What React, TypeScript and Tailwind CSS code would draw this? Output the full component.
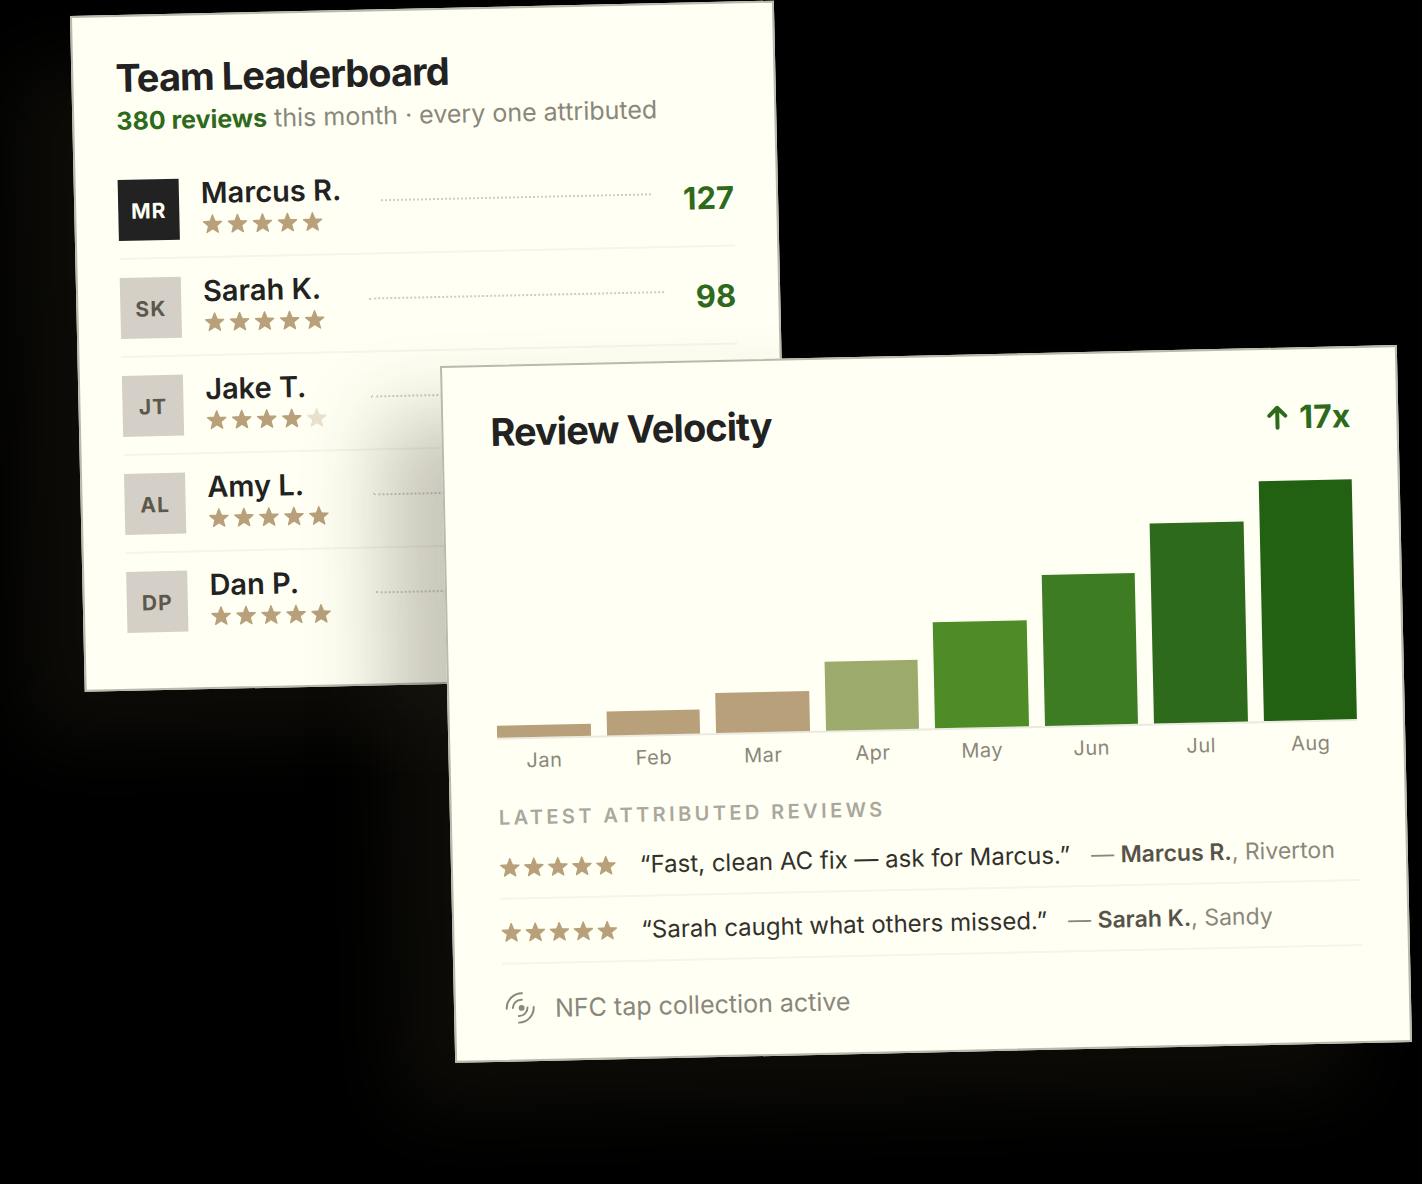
import React from "react";

type Member = {
  initials: string;
  name: string;
  rating: number;
  reviews?: number;
  lead?: boolean;
};

const members: Member[] = [
  { initials: "MR", name: "Marcus R.", rating: 5, reviews: 127, lead: true },
  { initials: "SK", name: "Sarah K.", rating: 5, reviews: 98 },
  { initials: "JT", name: "Jake T.", rating: 4 },
  { initials: "AL", name: "Amy L.", rating: 5 },
  { initials: "DP", name: "Dan P.", rating: 5 },
];

const months = [
  { label: "Jan", value: 12, color: "bg-[#b8a07a]" },
  { label: "Feb", value: 24, color: "bg-[#b8a07a]" },
  { label: "Mar", value: 40, color: "bg-[#b8a07a]" },
  { label: "Apr", value: 69, color: "bg-[#9cab6c]" },
  { label: "May", value: 106, color: "bg-[#4e8c28]" },
  { label: "Jun", value: 151, color: "bg-[#3d7c22]" },
  { label: "Jul", value: 200, color: "bg-[#2d6a1b]" },
  { label: "Aug", value: 240, color: "bg-[#236112]" },
];

const quotes = [
  { text: "“Fast, clean AC fix — ask for Marcus.”", author: "Marcus R.", city: "Riverton" },
  { text: "“Sarah caught what others missed.”", author: "Sarah K.", city: "Sandy" },
];

function Stars({ rating, className }: { rating: number; className: string }) {
  return (
    <div role="img" aria-label={`${rating} out of 5 stars`} className={`flex shrink-0 items-center ${className}`}>
      {[1, 2, 3, 4, 5].map((n) => (
        <svg
          key={n}
          viewBox="0.5 0.5 19 19"
          className={n <= rating ? "size-5 text-[#b8a07a]" : "size-5 text-[#b8a07a] opacity-30"}
          fill="currentColor"
          stroke="currentColor"
          strokeWidth="1.2"
          strokeLinejoin="round"
        >
          <path d="M10 1.4L12.35 7.36L18.75 7.76L13.8 11.84L15.41 18.04L10 14.6L4.59 18.04L6.2 11.84L1.25 7.76L7.65 7.36Z" />
        </svg>
      ))}
    </div>
  );
}

function Leaderboard() {
  return (
    <section className="ml-[70px] mt-4 w-[49.5%] origin-top-left -rotate-[1.25deg] border-2 border-[#b9b9ae] bg-[#fffff3] px-[42px] pt-[39px] pb-[37px] shadow-[-60px_50px_80px_rgba(48,46,30,0.27)]">
      <h2 className="text-[38px] leading-[44px] font-bold tracking-tight">Team Leaderboard</h2>
      <p className="mt-[5px] text-[25px] leading-8 whitespace-nowrap text-[#8a877b]">
        <strong className="font-bold text-[#2d6a1b]">380 reviews</strong> this month · every one attributed
      </p>
      <ul className="mt-[25px]">
        {members.map((m) => (
          <li key={m.initials} className="flex items-center border-b-2 border-[#f6f5ea] py-4 last:border-transparent">
            <div
              className={`flex size-[61px] shrink-0 items-center justify-center pt-[3px] text-[21px] font-bold tracking-wider ${
                m.lead ? "bg-[#222222] text-[#fffff3]" : "bg-[#d5d0c7] text-[#5c584d]"
              }`}
            >
              {m.initials}
            </div>
            <div className="ml-[22px] shrink-0 pt-[2px]">
              <div className="text-[29px] leading-[30px] font-semibold">{m.name}</div>
              <Stars rating={m.rating} className="h-8 gap-[5px] px-px pr-[5px]" />
            </div>
            <div className="mr-8 mb-2 ml-10 flex-1 border-b-2 border-dotted border-[#cfcdc3]" />
            {m.reviews !== undefined && (
              <div className="text-[31px] leading-none font-bold text-[#2d6a1b]">{m.reviews}</div>
            )}
          </li>
        ))}
      </ul>
    </section>
  );
}

function NfcIcon() {
  return (
    <svg viewBox="0 0 92 100" className="h-[33px] w-[30px]" fill="none" stroke="currentColor" strokeWidth="6" strokeLinecap="round">
      <circle cx="51" cy="50" r="9" fill="currentColor" stroke="none" />
      <path d="M5 52A47 47 0 0 1 53 5" />
      <path d="M24 50A26 26 0 0 1 52 25" />
      <path d="M88 48A46 46 0 0 1 42 95" />
      <path d="M69 49A26 26 0 0 1 42 75" />
    </svg>
  );
}

function Velocity() {
  return (
    <section className="absolute top-[366px] right-[25px] left-[440px] origin-top-left -rotate-[1.25deg] border-2 border-[#b9b9ae] bg-[#fffff3] pt-[43px] pr-[46px] pb-[35px] pl-[47px] shadow-[-60px_50px_80px_rgba(48,46,30,0.27)]">
      <header className="flex items-start justify-between">
        <h2 className="text-[38px] leading-[44px] font-bold tracking-tight">Review Velocity</h2>
        <p className="flex items-center gap-2.5 text-[32px] leading-[50px] font-bold text-[#2d6a1b]">
          <svg viewBox="0 0 24 26" className="h-[26px] w-6" fill="none" stroke="currentColor" strokeWidth="4" strokeLinecap="round" strokeLinejoin="round">
            <path d="M12 23V3M4 11l8-8 8 8" />
          </svg>
          17x
        </p>
      </header>

      <div className="mt-[38px] flex h-[242px] items-end gap-4 border-b-2 border-[#eceae0]">
        {months.map((m) => (
          <div key={m.label} className={`flex-1 ${m.color}`} style={{ height: m.value }} />
        ))}
      </div>
      <div className="mt-[9px] flex gap-4 text-center text-[20px] leading-6 tracking-wide text-[#8a877b]">
        {months.map((m) => (
          <span key={m.label} className="flex-1">
            {m.label}
          </span>
        ))}
      </div>

      <h3 className="mt-[33px] text-[20px] leading-6 font-semibold tracking-[0.17em] text-[#aaa89d] uppercase">
        Latest attributed reviews
      </h3>
      <ul className="mt-[5px]">
        {quotes.map((q) => (
          <li
            key={q.author}
            className="flex items-center border-b-2 border-[#f6f5ea] pt-[3px] leading-[60px] whitespace-nowrap"
          >
            <Stars rating={5} className="gap-1" />
            <div className="ml-6 flex items-baseline gap-[21px]">
              <q className="text-[24px] text-[#33312b] before:content-none after:content-none">{q.text}</q>
              <span className="text-[23px] text-[#8a877b]">
                — <strong className="font-semibold text-[#57534a]">{q.author}</strong>, {q.city}
              </span>
            </div>
          </li>
        ))}
      </ul>

      <p className="mt-[27px] flex items-center gap-5 pl-[2px] text-[25px] leading-8 text-[#8a877b]">
        <NfcIcon />
        NFC tap collection active
      </p>
    </section>
  );
}

export default function App() {
  return (
    <main className="relative flow-root min-h-screen overflow-hidden bg-black font-['Inter',sans-serif] text-[#222222]">
      <Leaderboard />
      <Velocity />
    </main>
  );
}
